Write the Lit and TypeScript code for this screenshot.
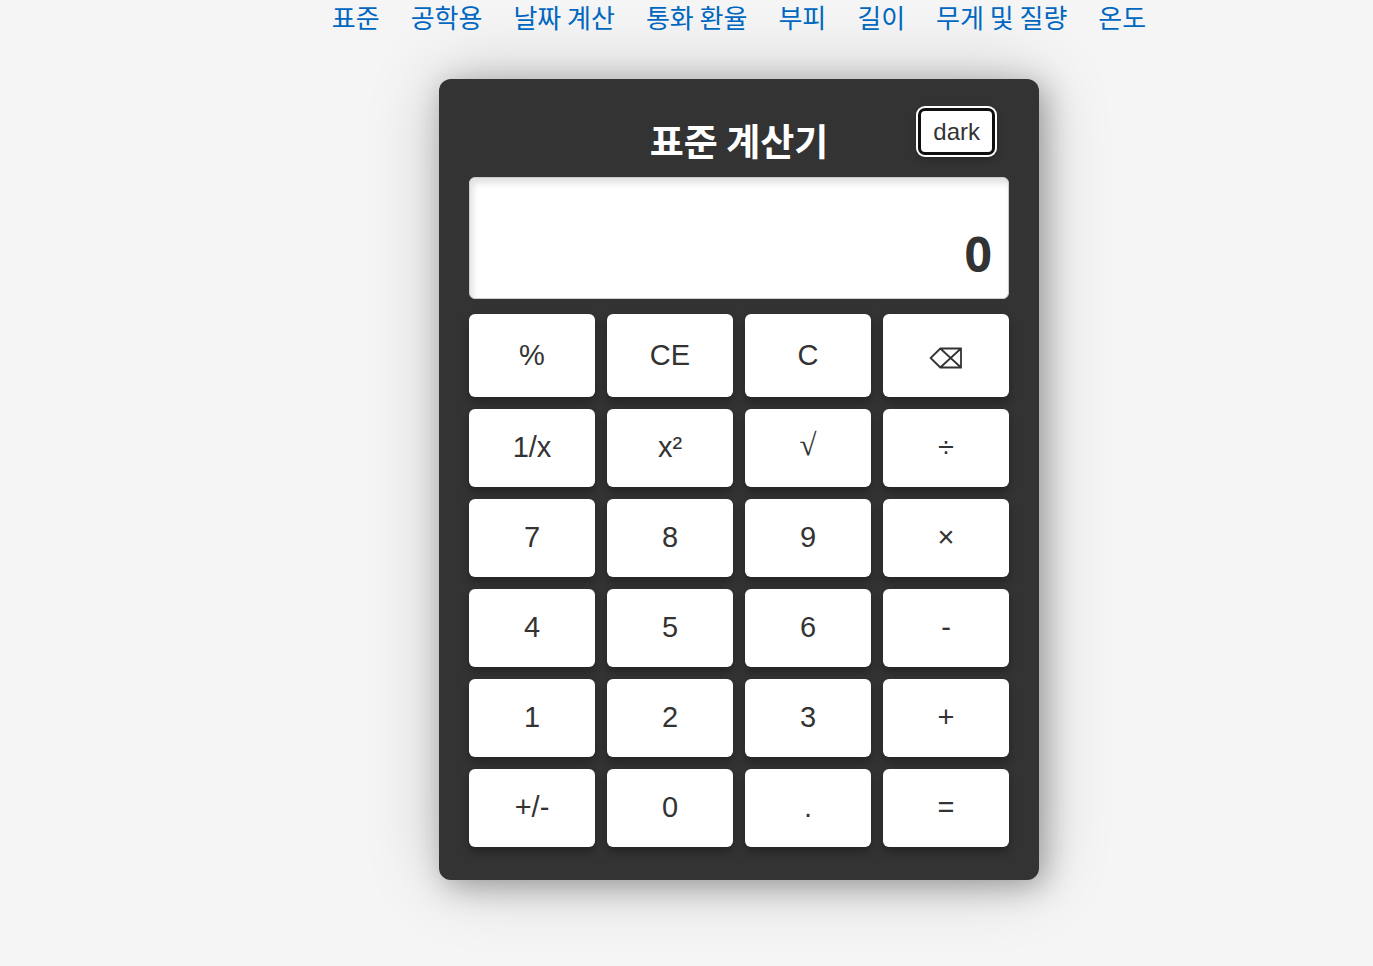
import { LitElement, html, css, svg } from "lit";
import { customElement, state } from "lit/decorators.js";

const LINKS = ["표준", "공학용", "날짜 계산", "통화 환율", "부피", "길이", "무게 및 질량", "온도"];

const KEYS = [
  "%", "CE", "C", "⌫",
  "1/x", "x²", "√", "÷",
  "7", "8", "9", "×",
  "4", "5", "6", "-",
  "1", "2", "3", "+",
  "+/-", "0", ".", "=",
];

const eraseIcon = html`<svg class="erase" width="34" height="22" viewBox="0 0 34 22" aria-hidden="true">
  ${svg`<path d="M11.3 1.5H32V20.5H11.3L1.6 11ZM11.3 1.5 32 20.5M32 1.5 11.3 20.5" fill="none" stroke="currentColor" stroke-width="1.8"/>`}
</svg>`;

@customElement("calc-keypad")
export class CalcKeypad extends LitElement {
  static styles = css`
    :host {
      display: grid;
      grid-template-columns: repeat(4, 1fr);
      grid-template-rows: 83px;
      grid-auto-rows: 78px;
      gap: 12px;
    }
    .key {
      display: flex;
      align-items: center;
      justify-content: center;
      padding: 0 0 2px;
      border: 0;
      border-radius: 6px;
      background: #fff;
      color: #333;
      font: 29px/32px "Liberation Sans", Arial, sans-serif;
      box-shadow: 0 5px 9px rgba(0, 0, 0, 0.3);
      cursor: pointer;
    }
    .root {
      padding-bottom: 6px;
      font-family: "Liberation Serif", serif;
      font-size: 31px;
    }
    .erase {
      display: block;
      margin-top: 6px;
    }
  `;

  private press(key: string) {
    this.dispatchEvent(new CustomEvent("key-press", { detail: key }));
  }

  render() {
    return KEYS.map(
      (key) => html`<button
        type="button"
        class=${key === "√" ? "key root" : "key"}
        aria-label=${key}
        @click=${() => this.press(key)}
      >${key === "⌫" ? eraseIcon : key}</button>`
    );
  }
}

@customElement("app-root")
export class AppRoot extends LitElement {
  static styles = css`
    :host {
      display: block;
      box-sizing: border-box;
      min-height: 100vh;
      padding: 0 0 86px 105px;
      background: #f5f5f5;
      color: #333;
      font-family: "Noto Sans CJK KR", sans-serif;
    }
    .nav {
      display: flex;
      flex-wrap: wrap;
      justify-content: center;
      gap: 31px;
      font-size: 26px;
      line-height: 34px;
    }
    .link {
      color: #0067c0;
      text-decoration: none;
    }
    .card {
      box-sizing: border-box;
      max-width: 600px;
      margin: 45px auto 0;
      padding: 29px 30px 33px;
      border-radius: 12px;
      background: #333;
      box-shadow: 6px 6px 30px rgba(0, 0, 0, 0.3), 0 0 75px rgba(0, 0, 0, 0.2);
    }
    .head {
      display: grid;
      grid-template-columns: 1fr auto 1fr;
      align-items: start;
      margin-bottom: 13px;
    }
    .title {
      grid-column: 2;
      margin: 8px 0 0;
      color: #fff;
      font-size: 37px;
      font-weight: 700;
      line-height: 48px;
    }
    .theme {
      justify-self: end;
      height: 47px;
      margin-right: 14px;
      padding: 0 12px;
      border: 3px solid #101010;
      border-radius: 7px;
      background: #fff;
      color: #333;
      font: 24px/28px "Liberation Sans", Arial, sans-serif;
      box-shadow: 0 0 0 2px #fff, 0 4px 9px rgba(0, 0, 0, 0.3);
      cursor: pointer;
    }
    .display {
      display: flex;
      align-items: flex-end;
      justify-content: flex-end;
      box-sizing: border-box;
      height: 122px;
      margin-bottom: 15px;
      padding: 16px;
      border: 1px solid #ccc;
      border-radius: 6px;
      background: #fff;
      box-shadow: inset 3px 5px 6px rgba(0, 0, 0, 0.12);
      font: 700 48px/56px "Noto Sans", sans-serif;
    }
  `;

  @state() private value = "0";

  private onKey(e: CustomEvent<string>) {
    const key = e.detail;
    if (/^\d$/.test(key)) this.value = this.value === "0" ? key : this.value + key;
    else if (key === "C" || key === "CE") this.value = "0";
    else if (key === "⌫") this.value = this.value.slice(0, -1) || "0";
  }

  render() {
    return html`
      <nav class="nav">${LINKS.map((t) => html`<a class="link" href="#">${t}</a>`)}</nav>
      <main class="card">
        <header class="head">
          <h1 class="title">표준 계산기</h1>
          <button type="button" class="theme">dark</button>
        </header>
        <output class="display">${this.value}</output>
        <calc-keypad @key-press=${this.onKey}></calc-keypad>
      </main>
    `;
  }
}
